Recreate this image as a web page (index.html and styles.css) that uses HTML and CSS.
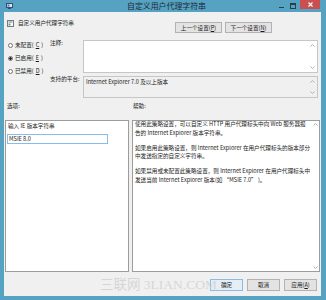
FILE: index.html
```html
<!DOCTYPE html>
<html lang="zh-CN">
  <head>
    <meta charset="UTF-8" />
    <meta name="viewport" content="width=device-width, initial-scale=1.0" />
    <title>自定义用户代理字符串</title>
    <link rel="stylesheet" href="styles.css">
  </head>
  <body>
    <div class="window">
      <div class="titlebar">
        <div class="app-icon">
          <svg width="7" height="6" viewBox="0 0 7 6">
            <rect x="0.5" y="0.5" width="6" height="4" fill="#d8e6f2" stroke="#35506e" stroke-width="1" />
            <rect x="1.5" y="1.5" width="2" height="2" fill="#3a78c2" />
            <rect x="2" y="5" width="3" height="1" fill="#35506e" />
          </svg>
        </div>
        <div class="title">自定义用户代理字符串</div>
        <div class="controls">
          <span class="ctl min"></span>
          <span class="ctl max"></span>
          <span class="ctl close">
            <svg width="5" height="5" viewBox="0 0 5 5">
              <path d="M0.5 0.5 L4.5 4.5 M4.5 0.5 L0.5 4.5" stroke="#fff" stroke-width="1.1" />
            </svg>
          </span>
        </div>
      </div>

      <div class="client">
        <div class="header">
          <div class="policy-name">
            <svg width="7" height="7" viewBox="0 0 7 7">
              <rect x="0.5" y="0.5" width="6" height="6" fill="#fbfbfb" stroke="#7a7a7a" stroke-width="1" />
              <rect x="1.5" y="1.5" width="4" height="1" fill="#4a86c8" />
              <rect x="1.5" y="3.5" width="2" height="2" fill="#6aa84f" />
            </svg>
            <span>自定义用户代理字符串</span>
          </div>
          <div class="nav-buttons">
            <button class="btn nav">上一个设置(<u>P</u>)</button>
            <button class="btn nav">下一个设置(<u>N</u>)</button>
          </div>
        </div>

        <div class="settings">
          <div class="states">
            <label class="radio"><span class="dot"></span>未配置(<u>C</u>)</label>
            <label class="radio"><span class="dot checked"></span>已启用(<u>E</u>)</label>
            <label class="radio"><span class="dot"></span>已禁用(<u>D</u>)</label>
          </div>
          <div class="field-label">注释:</div>
          <div class="box comment">
            <div class="box-body"></div>
            <div class="scroll">
              <svg width="5" height="3" viewBox="0 0 5 3"><path d="M0.5 2.5 L2.5 0.5 L4.5 2.5" fill="none" stroke="#b0b0b0" /></svg>
              <svg width="5" height="3" viewBox="0 0 5 3"><path d="M0.5 0.5 L2.5 2.5 L4.5 0.5" fill="none" stroke="#b0b0b0" /></svg>
            </div>
          </div>
          <div class="field-label">支持的平台:</div>
          <div class="box platform">
            <div class="box-body">Internet Explorer 7.0 及以上版本</div>
            <div class="scroll">
              <svg width="5" height="3" viewBox="0 0 5 3"><path d="M0.5 2.5 L2.5 0.5 L4.5 2.5" fill="none" stroke="#b0b0b0" /></svg>
              <svg width="5" height="3" viewBox="0 0 5 3"><path d="M0.5 0.5 L2.5 2.5 L4.5 0.5" fill="none" stroke="#b0b0b0" /></svg>
            </div>
          </div>
        </div>

        <div class="section-labels">
          <span>选项:</span>
          <span>帮助:</span>
        </div>

        <div class="panels">
          <div class="panel options">
            <div class="option-label">输入 IE 版本字符串</div>
            <input class="option-input" type="text" value="MSIE 8.0" />
          </div>
          <div class="panel help">
            <div class="help-text">
              <p>使用此策略设置，可以自定义 HTTP 用户代理标头中向 Web 服务器报<br>告的 Internet Explorer 版本字符串。</p>
              <p>如果启用此策略设置，则 Internet Explorer 在用户代理标头的版本部分<br>中发送指定的自定义字符串。</p>
              <p>如果禁用或未配置此策略设置，则 Internet Explorer 在用户代理标头中<br>发送当前 Internet Explorer 版本(如 “MSIE 7.0” )。</p>
            </div>
            <div class="scroll">
              <svg width="5" height="3" viewBox="0 0 5 3"><path d="M0.5 2.5 L2.5 0.5 L4.5 2.5" fill="none" stroke="#b0b0b0" /></svg>
              <svg width="5" height="3" viewBox="0 0 5 3"><path d="M0.5 0.5 L2.5 2.5 L4.5 0.5" fill="none" stroke="#b0b0b0" /></svg>
            </div>
          </div>
        </div>

        <div class="footer">
          <button class="btn default">确定</button>
          <button class="btn">取消</button>
          <button class="btn">应用(<u>A</u>)</button>
        </div>

        <div class="watermark">三联网 3LIAN.COM</div>
      </div>
    </div>
  </body>
</html>
```

FILE: styles.css
```css
body {
  margin: 0;
  font-family: "Noto Sans CJK SC", "Noto Sans", sans-serif;
  font-size: 5.6px;
  line-height: 8px;
  color: #1a1a1a;
}
.window {
  width: 326px;
  height: 300px;
  display: flex;
  flex-direction: column;
  background-color: #56a2c3;
  box-sizing: border-box;
}
.titlebar {
  height: 12px;
  display: grid;
  grid-template-columns: 1fr auto 1fr;
  flex-shrink: 0;
}
.app-icon {
  padding: 3px 0 0 6px;
}
.app-icon svg {
  display: block;
}
.title {
  font-size: 7.9px;
  line-height: 12px;
  padding-left: 7px;
  color: #1c2a33;
}
.controls {
  display: flex;
  justify-content: flex-end;
  align-items: flex-start;
  padding-right: 6px;
}
.ctl {
  display: block;
}
.min {
  width: 5px;
  height: 1px;
  margin: 7px 6px 0 0;
  background-color: #2a3f4a;
}
.max {
  width: 4px;
  height: 3px;
  margin: 3px 4px 0 0;
  border: 1px solid #2a3f4a;
  border-top-width: 2px;
}
.close {
  width: 20px;
  height: 9px;
  background-color: #c9504f;
  display: flex;
  align-items: center;
  justify-content: center;
}
.close svg {
  display: block;
}
.client {
  flex: 1;
  margin: 0 5px 4px 4px;
  background-color: #f0f0f0;
  display: flex;
  flex-direction: column;
  position: relative;
  overflow: hidden;
}
.header {
  display: flex;
  justify-content: space-between;
  align-items: flex-start;
  padding-top: 7px;
}
.policy-name {
  display: flex;
  align-items: center;
  gap: 4px;
  padding-left: 3px;
}
.policy-name svg {
  display: block;
}
.nav-buttons {
  display: flex;
  gap: 3px;
  margin: 3px 49px 0 0;
}
.btn {
  font-family: inherit;
  font-size: 5.6px;
  line-height: 8px;
  color: #1a1a1a;
  background-color: #e3e3e3;
  border: 1px solid #b2b2b2;
  padding: 0;
  margin: 0;
  height: 12px;
  width: 33px;
  box-sizing: border-box;
}
.btn.nav {
  width: 47px;
  height: 11px;
}
.btn.default {
  border-color: #86bde8;
  background-color: #e6eef5;
}
.settings {
  display: grid;
  grid-template-columns: 42px 33px 235px;
  grid-template-rows: 33px 22px;
  row-gap: 3px;
  margin-top: 7px;
  padding-left: 4px;
}
.states {
  grid-row: 1 / span 2;
  display: flex;
  flex-direction: column;
  gap: 5px;
  padding-top: 1px;
}
.radio {
  display: flex;
  align-items: center;
  gap: 2px;
  height: 8px;
}
.dot {
  width: 5px;
  height: 5px;
  border: 1px solid #707070;
  border-radius: 50%;
  background-color: #fff;
  box-sizing: border-box;
}
.dot.checked {
  background: radial-gradient(circle, #2b2b2b 1.1px, #fff 1.5px);
}
.field-label {
  line-height: 7px;
}
.box {
  display: flex;
  border: 1px solid #c6c6c6;
  box-sizing: border-box;
}
.comment {
  background-color: #fff;
}
.platform {
  background-color: #f0f0f0;
}
.box-body {
  flex: 1;
  padding: 1px 2px;
}
.scroll {
  width: 9px;
  display: flex;
  flex-direction: column;
  justify-content: space-between;
  align-items: center;
  padding: 3px 0;
}
.scroll svg {
  display: block;
}
.section-labels {
  display: grid;
  grid-template-columns: 126px 188px;
  margin-top: 4px;
  padding-left: 3px;
}
.panels {
  display: grid;
  grid-template-columns: 124px 188px;
  column-gap: 3px;
  height: 152px;
  margin-top: 10px;
  padding-left: 1px;
}
.panel {
  border: 1px solid #9c9c9c;
  background-color: #fff;
  box-sizing: border-box;
}
.options {
  padding: 1px 2px;
}
.option-input {
  display: block;
  width: 101px;
  height: 10px;
  margin: 4px 0 0 -1px;
  padding: 0 1px;
  border: 1px solid #88bde8;
  font-family: inherit;
  font-size: 5.6px;
  color: #1a1a1a;
  box-sizing: border-box;
  outline: none;
}
.help {
  display: flex;
}
.help-text {
  flex: 1;
  margin-top: -1px;
  padding-left: 2px;
  line-height: 8.5px;
  white-space: nowrap;
  overflow: hidden;
}
.help-text p {
  margin: 0 0 6.5px;
}
.help .scroll {
  width: 8px;
  padding: 2px 0;
}
.footer {
  display: flex;
  justify-content: flex-end;
  gap: 4px;
  margin-top: 7px;
  padding-right: 4px;
}
.watermark {
  position: absolute;
  left: 96px;
  top: 264px;
  font-family: "Liberation Serif", "Noto Sans CJK SC", serif;
  font-size: 13.5px;
  line-height: 17px;
  color: rgba(205, 205, 205, 0.75);
  white-space: nowrap;
  pointer-events: none;
}
```
